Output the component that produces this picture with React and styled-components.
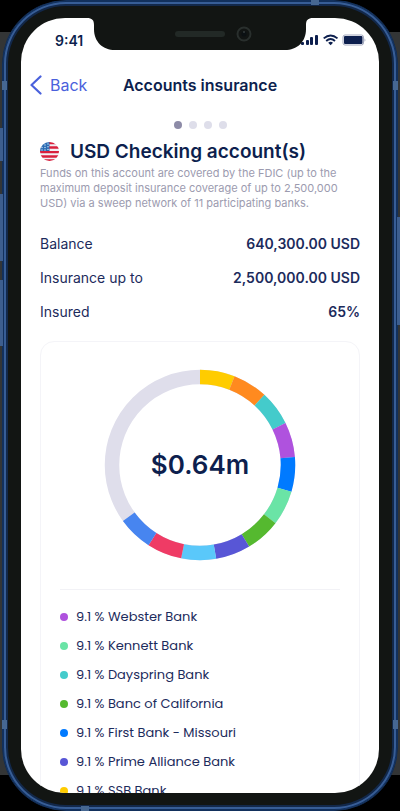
import React from "react";
import styled, { createGlobalStyle } from "styled-components";

const navy = "#0d1f4e";
const ink = "#1c2b5c";

const segments = [
  "#ffcc00",
  "#ff8a1f",
  "#44cbcb",
  "#af52de",
  "#007aff",
  "#6ae4a6",
  "#55b92f",
  "#5856d6",
  "#5ac8fa",
  "#ef3b65",
  "#4785f0",
];

const summary = [
  { label: "Balance", value: "640,300.00 USD" },
  { label: "Insurance up to", value: "2,500,000.00 USD" },
  { label: "Insured", value: "65%" },
];

const banks = [
  { name: "Webster Bank", color: "#af52de" },
  { name: "Kennett Bank", color: "#6ae4a6" },
  { name: "Dayspring Bank", color: "#44cbcb" },
  { name: "Banc of California", color: "#55b92f" },
  { name: "First Bank - Missouri", color: "#007aff" },
  { name: "Prime Alliance Bank", color: "#5856d6" },
  { name: "SSB Bank", color: "#ffcc00" },
];

const GlobalStyle = createGlobalStyle`
  *, *::before, *::after { box-sizing: border-box; }
  body {
    margin: 0;
    background: #000;
    color: ${ink};
    font-family: Inter, "Liberation Sans", sans-serif;
    -webkit-font-smoothing: antialiased;
  }
`;

const Stage = styled.div`
  position: relative;
  display: flex;
  height: 100vh;
  padding: 0 2px;
  overflow: hidden;
  background: linear-gradient(#000 32px, #333536 32px, #333536 calc(100% - 36px), #000 calc(100% - 36px));
`;

const SideKey = styled.span`
  position: absolute;
  top: ${(p) => p.$top}px;
  ${(p) => p.$side}: 0;
  width: 3px;
  height: ${(p) => p.$length}px;
  background: #3d5e8f;
`;

const AntennaBand = styled.span`
  position: absolute;
  ${(p) => p.$edge}: ${(p) => (p.$across ? 0 : 2)}px;
  ${(p) => p.$from}: ${(p) => p.$offset}px;
  width: ${(p) => (p.$across ? 8 : 5)}px;
  height: ${(p) => (p.$across ? 5 : 9)}px;
  background: #466791;
`;

const Phone = styled.div`
  flex: 1;
  min-width: 0;
  display: flex;
  padding: 13px 14px;
  border: 1px solid #12305c;
  border-radius: 64px;
  background: #121513;
  box-shadow: inset 0 0 0 1px #12305c, inset 0 0 0 3px #375d96, inset 0 0 0 5px #12284a;
`;

const Screen = styled.main`
  position: relative;
  flex: 1;
  min-width: 0;
  margin: 4px;
  border-radius: 44px;
  overflow: hidden;
  background: #fff;
`;

const NotchArt = styled.svg`
  position: absolute;
  top: 0;
  left: 50%;
  width: 226px;
  height: 33px;
  transform: translateX(-50%);
`;

const StatusBar = styled.header`
  display: flex;
  align-items: center;
  justify-content: space-between;
  height: 44px;
  padding: 0 13px 0 34px;
`;

const Time = styled.time`
  color: ${navy};
  font-size: 14px;
  font-weight: 600;
`;

const StatusArt = styled.svg`
  width: 65px;
  height: 12px;
`;

const NavBar = styled.nav`
  display: grid;
  grid-template-columns: 1fr auto 1fr;
  align-items: center;
  height: 46px;
  padding: 0 9px;
`;

const BackButton = styled.button`
  display: flex;
  align-items: center;
  justify-self: start;
  gap: 8px;
  padding: 0;
  border: 0;
  background: none;
  color: #4a61dc;
  font: 400 16px/20px Inter, "Liberation Sans", sans-serif;
  cursor: pointer;

  svg {
    width: 12px;
    height: 20px;
  }
`;

const PageTitle = styled.h1`
  margin: 0;
  color: ${navy};
  font-size: 16px;
  font-weight: 600;
  line-height: 20px;
  white-space: nowrap;
`;

const Pager = styled.div`
  display: flex;
  justify-content: center;
  gap: 7px;
  padding: 13px 0 11px;
`;

const PagerDot = styled.button`
  width: 8px;
  height: 8px;
  padding: 0;
  border: 0;
  border-radius: 50%;
  background: ${(p) => (p.$active ? "#8d8ba7" : "#dedeea")};
`;

const Content = styled.section`
  padding: 0 19px;
`;

const AccountHeading = styled.div`
  display: flex;
  align-items: center;
  gap: 10px;
  height: 24px;

  svg {
    width: 20px;
    height: 20px;
  }
`;

const AccountTitle = styled.h2`
  margin: 0;
  color: ${navy};
  font-size: 19px;
  font-weight: 600;
  line-height: 24px;
  white-space: nowrap;
`;

const Description = styled.p`
  margin: 2px 0 0;
  color: #9c9baf;
  font-size: 11px;
  line-height: 15px;
`;

const SummaryList = styled.dl`
  display: grid;
  gap: 14px;
  margin: 23px 0 19px;
`;

const SummaryRow = styled.div`
  display: flex;
  justify-content: space-between;
  font-size: 14px;
  line-height: 20px;

  dd {
    margin: 0;
    font-weight: 600;
  }
`;

const Card = styled.section`
  padding: 27px 19px 0;
  border: 1px solid #f4f4f8;
  border-radius: 14px;
`;

const Chart = styled.figure`
  display: grid;
  place-items: center;
  margin: 0;
  padding-bottom: 28px;
  border-bottom: 1px solid #f2f2f6;

  > * {
    grid-area: 1 / 1;
  }

  svg {
    width: 192px;
    height: 192px;
  }
`;

const Total = styled.figcaption`
  color: ${navy};
  font-size: 26px;
  font-weight: 600;
  line-height: 32px;
`;

const Legend = styled.ul`
  display: grid;
  gap: 9px;
  margin: 17px 0;
  padding: 0;
  list-style: none;
`;

const LegendItem = styled.li`
  display: flex;
  align-items: center;
  gap: 8px;
  font-family: Poppins, Inter, "Liberation Sans", sans-serif;
  font-size: 13px;
  line-height: 20px;
  white-space: nowrap;

  &::before {
    content: "";
    width: 8px;
    height: 8px;
    border-radius: 50%;
    background: ${(p) => p.$color};
  }
`;

function Notch() {
  return (
    <NotchArt viewBox="0 0 226 33" aria-hidden="true">
      <path
        d="M0 0H226C221 0 219 2 219 7V11C219 24 210 32 198 32H28C16 32 7 24 7 11V7C7 2 5 0 0 0Z"
        fill="#121513"
      />
      <rect x="88" y="13" width="50" height="6" rx="3" fill="#222926" />
      <circle cx="157" cy="16" r="6.5" fill="#111413" stroke="#292f2d" strokeWidth="2" />
      <circle cx="157" cy="16" r="2.5" fill="#0b1013" />
      <circle cx="157" cy="14" r="1" fill="#343b3c" />
    </NotchArt>
  );
}

function StatusIcons() {
  return (
    <StatusArt viewBox="0 0 65 12" fill={navy} aria-label="Signal, Wi-Fi, battery">
      <rect x="0" y="8" width="3" height="3" rx="1" />
      <rect x="5" y="6" width="3" height="5" rx="1" />
      <rect x="9" y="3" width="3" height="8" rx="1" />
      <rect x="14" y="1" width="3" height="10" rx="1" />
      <g fill="none" stroke={navy} strokeWidth="1.9">
        <path d="M22.7 4.4Q29.6-1.5 36.5 4.4" />
        <path d="M25.2 7Q29.6 3.2 34 7" />
      </g>
      <path d="M27.2 8.7Q29.6 7 32 8.7L29.6 11.2Z" />
      <rect x="42" y="1" width="20.5" height="10" rx="2" fill="#fff" stroke="#a3a8be" />
      <rect x="43" y="2" width="18.5" height="8" rx="1" />
      <path d="M63.5 4.2Q65.4 6 63.5 7.8Z" fill="#a3a8be" />
    </StatusArt>
  );
}

function UsFlag() {
  return (
    <svg viewBox="0 0 20 20" role="img" aria-label="United States">
      <defs>
        <clipPath id="flag-disc">
          <circle cx="9.5" cy="9.5" r="9.5" />
        </clipPath>
      </defs>
      <g clipPath="url(#flag-disc)">
        <path fill="#f1f0f4" d="M0 0H20V20H0Z" />
        <path
          stroke="#d91f3c"
          strokeWidth="2.3"
          d="M9 1H20M9 5.5H20M0 10.2H20M0 14.5H20M0 18.4H20"
        />
        <path fill="#2a6cb4" d="M0 0H9.5V9H0Z" />
        <g fill="#d8e9f7">
          <circle cx="5" cy="3" r=".7" />
          <circle cx="8" cy="2" r=".7" />
          <circle cx="2" cy="5.5" r=".7" />
          <circle cx="5" cy="5.5" r=".7" />
          <circle cx="8" cy="4.7" r=".7" />
          <circle cx="2" cy="8" r=".7" />
          <circle cx="5" cy="8" r=".7" />
          <circle cx="8" cy="7.4" r=".7" />
        </g>
      </g>
    </svg>
  );
}

function Donut() {
  const share = 65 / segments.length;
  return (
    <svg viewBox="0 0 192 192" aria-hidden="true">
      <g transform="rotate(-90 96 96)" fill="none" strokeWidth="14.5">
        <circle cx="96" cy="96" r="88" stroke="#dfdeeb" />
        {segments.map((color, i) => (
          <circle
            key={color}
            cx="96"
            cy="96"
            r="88"
            pathLength="100"
            stroke={color}
            strokeDasharray={`${share} ${100 - share}`}
            strokeDashoffset={-share * i}
          />
        ))}
      </g>
    </svg>
  );
}

export default function App() {
  return (
    <>
      <GlobalStyle />
      <Stage>
        <SideKey $side="left" $top={128} $length={33} />
        <SideKey $side="left" $top={194} $length={67} />
        <SideKey $side="left" $top={280} $length={66} />
        <SideKey $side="right" $top={217} $length={108} />
        <Phone>
          <Screen>
            <StatusBar>
              <Time>9:41</Time>
              <StatusIcons />
            </StatusBar>
            <NavBar>
              <BackButton type="button">
                <svg viewBox="0 0 12 20" aria-hidden="true">
                  <path
                    d="M10.5 1.5L1.5 10L10.5 18.5"
                    fill="none"
                    stroke="currentColor"
                    strokeWidth="2.2"
                    strokeLinecap="round"
                    strokeLinejoin="round"
                  />
                </svg>
                Back
              </BackButton>
              <PageTitle>Accounts insurance</PageTitle>
            </NavBar>
            <Pager>
              {[1, 2, 3, 4].map((n) => (
                <PagerDot key={n} type="button" aria-label={`Account ${n}`} $active={n === 1} />
              ))}
            </Pager>
            <Content>
              <AccountHeading>
                <UsFlag />
                <AccountTitle>USD Checking account(s)</AccountTitle>
              </AccountHeading>
              <Description>
                Funds on this account are covered by the FDIC (up to the maximum deposit
                insurance coverage of up to 2,500,000 USD) via a sweep network of 11
                participating banks.
              </Description>
              <SummaryList>
                {summary.map((row) => (
                  <SummaryRow key={row.label}>
                    <dt>{row.label}</dt>
                    <dd>{row.value}</dd>
                  </SummaryRow>
                ))}
              </SummaryList>
              <Card>
                <Chart>
                  <Donut />
                  <Total>$0.64m</Total>
                </Chart>
                <Legend>
                  {banks.map((bank) => (
                    <LegendItem key={bank.name} $color={bank.color}>
                      9.1 % {bank.name}
                    </LegendItem>
                  ))}
                </Legend>
              </Card>
            </Content>
            <Notch />
          </Screen>
        </Phone>
        <AntennaBand $edge="left" $from="top" $offset={81} />
        <AntennaBand $edge="right" $from="top" $offset={81} />
        <AntennaBand $edge="left" $from="bottom" $offset={82} />
        <AntennaBand $edge="right" $from="bottom" $offset={82} />
        <AntennaBand $across $edge="top" $from="right" $offset={81} />
        <AntennaBand $across $edge="bottom" $from="left" $offset={81} />
      </Stage>
    </>
  );
}
